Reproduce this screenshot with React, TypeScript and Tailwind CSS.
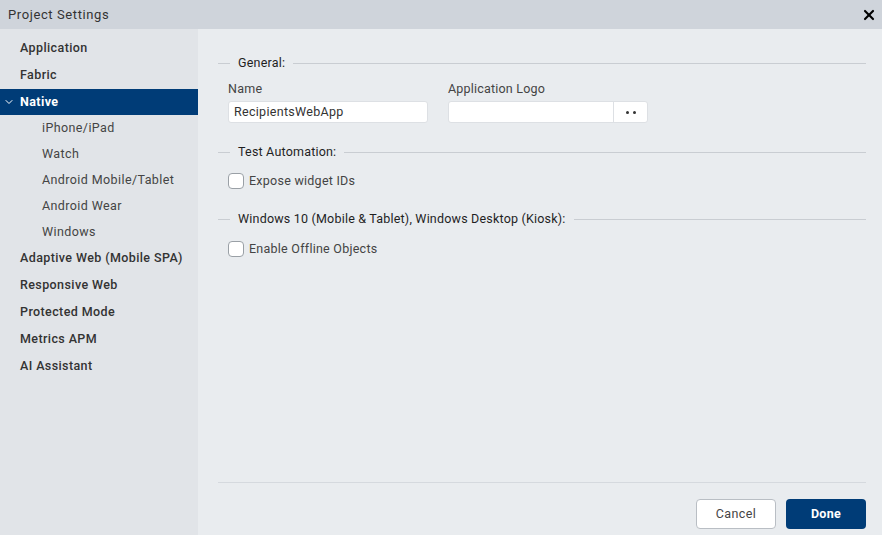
import { X, ChevronDown } from "lucide-react";

const topItems = ["Adaptive Web (Mobile SPA)", "Responsive Web", "Protected Mode", "Metrics APM", "AI Assistant"];
const nativeChildren = ["iPhone/iPad", "Watch", "Android Mobile/Tablet", "Android Wear", "Windows"];

function Section({ title }: { title: string }) {
  return (
    <div className="flex items-center h-[20px]">
      <div className="w-[12px] h-px bg-[#c9cdd2]" />
      <span className="px-2 text-[12.5px] text-[#1f1f1f] tracking-[0.2px]">{title}</span>
      <div className="flex-1 h-px bg-[#c9cdd2]" />
    </div>
  );
}

function Check({ label }: { label: string }) {
  return (
    <label className="flex items-center gap-[5px] ml-[10px]">
      <span className="w-[16px] h-[16px] rounded-[4px] border border-[#9aa0a6] bg-white" />
      <span className="text-[12.5px] text-[#444] tracking-[0.25px]">{label}</span>
    </label>
  );
}

export default function App() {
  return (
    <div className="w-[882px] h-[535px] flex flex-col bg-[#e9ecef] font-['Roboto',sans-serif] overflow-hidden">
      {/* title bar */}
      <div className="h-[29px] bg-[#cfd4db] flex items-center justify-between pl-[8px] pr-[5px]">
        <span className="text-[13px] text-[#333] tracking-[0.6px]">Project Settings</span>
        <X className="w-[16px] h-[16px] text-black" strokeWidth={3.2} />
      </div>

      <div className="flex flex-1 min-h-0">
        {/* sidebar */}
        <div className="w-[198px] bg-[#e1e4e8] pt-[6px] flex flex-col tracking-[0.4px]">
          {["Application", "Fabric"].map((t) => (
            <div key={t} className="h-[27px] flex items-center pl-[20px] text-[12.5px] font-medium text-[#333]">
              {t}
            </div>
          ))}
          <div className="h-[26px] flex items-center pl-[3px] bg-[#003c77] text-white text-[12.5px] font-bold">
            <ChevronDown className="w-[12px] h-[12px] mr-[5px]" strokeWidth={2} />
            Native
          </div>
          {nativeChildren.map((t) => (
            <div key={t} className="h-[26px] flex items-center pl-[42px] text-[12.5px] text-[#444]">
              {t}
            </div>
          ))}
          {topItems.map((t) => (
            <div key={t} className="h-[27px] flex items-center pl-[20px] text-[12.5px] font-medium text-[#333]">
              {t}
            </div>
          ))}
        </div>

        {/* content */}
        <div className="flex-1 flex flex-col pl-[20px] pr-[16px]">
          <div className="flex-1 pt-[24px]">
            <Section title="General:" />
            <div className="flex gap-[20px] ml-[10px] mt-[8px]">
              <div className="flex flex-col">
                <span className="text-[12.5px] text-[#444] h-[16px] leading-[16px] tracking-[0.3px]">Name</span>
                <div className="mt-[4px] w-[200px] h-[22px] bg-white rounded-[3px] border border-[#dde0e4] flex items-center px-[5px] text-[12.5px] text-[#333] tracking-[0.3px]">
                  RecipientsWebApp
                </div>
              </div>
              <div className="flex flex-col">
                <span className="text-[12.5px] text-[#444] h-[16px] leading-[16px] tracking-[0.2px]">Application Logo</span>
                <div className="mt-[4px] flex h-[22px] bg-white rounded-[3px] border border-[#dde0e4]">
                  <div className="w-[165px] border-r border-[#dde0e4]" />
                  <div className="w-[33px] flex items-center justify-center gap-[4px]">
                    <span className="w-[3px] h-[3px] rounded-full bg-[#333]" />
                    <span className="w-[3px] h-[3px] rounded-full bg-[#333]" />
                  </div>
                </div>
              </div>
            </div>

            <div className="mt-[19px]">
              <Section title="Test Automation:" />
            </div>
            <div className="mt-[10px]">
              <Check label="Expose widget IDs" />
            </div>

            <div className="mt-[19px]">
              <Section title="Windows 10 (Mobile & Tablet), Windows Desktop (Kiosk):" />
            </div>
            <div className="mt-[10px]">
              <Check label="Enable Offline Objects" />
            </div>
          </div>

          {/* footer */}
          <div className="border-t border-[#d5d9de] h-[53px] flex items-center justify-end gap-[10px] pt-[10px]">
            <button className="w-[80px] h-[30px] rounded-[4px] border border-[#b9bec4] bg-white text-[12.5px] text-[#444] tracking-[0.4px]">
              Cancel
            </button>
            <button className="w-[80px] h-[30px] rounded-[4px] bg-[#003c77] text-[12.5px] font-bold text-white tracking-[0.3px]">
              Done
            </button>
          </div>
        </div>
      </div>
    </div>
  );
}
